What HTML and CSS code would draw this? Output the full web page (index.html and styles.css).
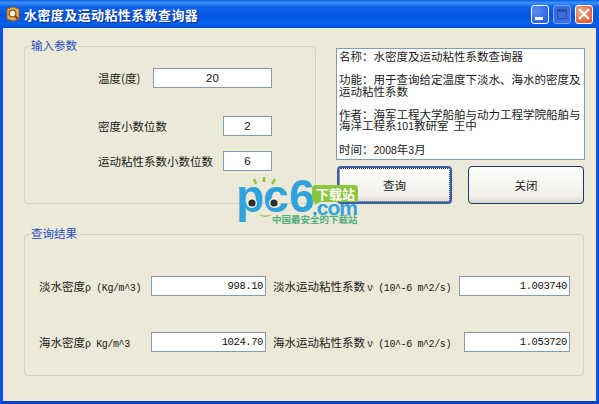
FILE: index.html
```html
<!DOCTYPE html>
<html lang="zh-CN">
<head>
    <meta charset="UTF-8">
    <title>水密度及运动粘性系数查询器</title>
    <link rel="stylesheet" href="styles.css">
</head>
<body>
    <div class="window">
        <div class="titlebar">
            <svg class="app-icon" width="16" height="16" viewBox="0 0 16 16">
                <path d="M2 3 L8 1 L14 3 L14 13 L8 15 L2 13 Z" fill="#e8b04a" stroke="#a8641c"/>
                <circle cx="7.5" cy="7.5" r="3.4" fill="#f6f2e4" stroke="#8a5a20" stroke-width="1.4"/>
                <path d="M10 10 L13 13" stroke="#8a3a10" stroke-width="2"/>
            </svg>
            <span class="title">水密度及运动粘性系数查询器</span>
            <div class="caption-btns">
                <div class="cap-btn cap-min"><span class="min-glyph"></span></div>
                <div class="cap-btn cap-max"><span class="max-glyph"></span></div>
                <div class="cap-btn cap-close">
                    <svg width="14" height="14" viewBox="0 0 14 14"><path d="M2 2 L12 12 M12 2 L2 12" stroke="#fff" stroke-width="2.4"/></svg>
                </div>
            </div>
        </div>

        <div class="client">
            <div class="top-row">
                <fieldset class="group group-input">
                    <legend>输入参数</legend>
                    <div class="group-body input-body">
                        <div class="row row-temp">
                            <span class="label">温度(度)</span>
                            <div class="field field-temp">20</div>
                        </div>
                        <div class="row row-density">
                            <span class="label">密度小数位数</span>
                            <div class="field field-small">2</div>
                        </div>
                        <div class="row row-visc">
                            <span class="label">运动粘性系数小数位数</span>
                            <div class="field field-small">6</div>
                        </div>
                    </div>
                </fieldset>

                <div class="side">
                    <div class="about">
                        名称：水密度及运动粘性系数查询器<br><br>
                        功能：用于查询给定温度下淡水、海水的密度及<br>运动粘性系数<br><br>
                        作者：海军工程大学船舶与动力工程学院船舶与<br>海洋工程系<span class="digits">101</span>教研室&nbsp;&nbsp;王中<br><br>
                        时间：<span class="digits">2008</span>年<span class="digits">3</span>月
                    </div>
                    <div class="btn-group">
                        <button class="btn btn-default">查询</button>
                        <button class="btn">关闭</button>
                    </div>
                </div>
            </div>

            <fieldset class="group group-result">
                <legend>查询结果</legend>
                <div class="group-body result-body">
                    <div class="result-row">
                        <span class="label label-left">淡水密度<span class="latin">ρ (Kg/m^3)</span></span>
                        <div class="field field-num field-density">998.10</div>
                        <span class="label label-right">淡水运动粘性系数<span class="latin latin-visc">ν (10^-6 m^2/s)</span></span>
                        <div class="field field-num field-fresh">1.003740</div>
                    </div>
                    <div class="result-row result-row-2">
                        <span class="label label-left">海水密度<span class="latin">ρ Kg/m^3</span></span>
                        <div class="field field-num field-density">1024.70</div>
                        <span class="label label-right">海水运动粘性系数<span class="latin latin-visc">ν (10^-6 m^2/s)</span></span>
                        <div class="field field-num field-sea">1.053720</div>
                    </div>
                </div>
            </fieldset>

            <!-- watermark sits on top of the form -->
            <svg class="watermark" width="125" height="80" viewBox="0 -14 125 80">
                <path d="M20 8 L18 3 M28 6 L28 1 M36 8 L39 3" stroke="#8cc63f" stroke-width="2.5" fill="none"/>
                <text class="wm-pc" x="0" y="36">pc</text>
                <text class="wm-pc" x="53" y="36">6</text>
                <circle cx="16" cy="27" r="5" fill="#f4f2e6"/>
                <circle cx="16" cy="27" r="3.6" fill="#2c2c2c"/>
                <circle cx="38" cy="27" r="5" fill="#f4f2e6"/>
                <circle cx="38" cy="27" r="3.6" fill="#2c2c2c"/>
                <path d="M22 38 Q29 44 37 38 Q29 41 22 38 Z" fill="#8cc63f"/>
                <path d="M76 13 Q76 9 80 9 L118 9 Q122 9 122 13 L122 23 Q122 26 118 26 L84 26 L78 29 L79 26 Q76 25 76 23 Z" fill="#8cc63f"/>
                <text class="wm-site" x="80" y="23">下载站</text>
                <text class="wm-com" x="76" y="39">.com</text>
                <text class="wm-slogan" x="36" y="47">中国最安全的下载站</text>
            </svg>
        </div>
    </div>
</body>
</html>
```

FILE: styles.css
```css
* {
    box-sizing: border-box;
}

html, body {
    margin: 0;
    padding: 0;
    height: 100%;
    overflow: hidden;
}

body {
    font-family: "Noto Sans CJK SC", "Liberation Sans", sans-serif;
    font-size: 11.5px;
    color: #1a1a1a;
}

.window {
    width: 599px;
    height: 404px;
    display: flex;
    flex-direction: column;
    background: #0a50e0;
    border-left: 3px solid #0c52e6;
    border-right: 3px solid #0c52e6;
    border-bottom: 3px solid #0a3fc0;
}

/* title bar */
.titlebar {
    height: 28px;
    margin: 0 -3px;
    display: flex;
    align-items: center;
    padding: 0 6px 0 5px;
    background: linear-gradient(#0a5ee8 0%, #3c92f8 10%, #0e62ea 24%, #0355e0 55%, #0660ee 85%, #0350d4 100%);
}

.app-icon {
    flex: none;
}

.title {
    margin-left: 3px;
    font-size: 13px;
    font-weight: bold;
    letter-spacing: 0.4px;
    color: #fff;
    text-shadow: 1px 1px 1px #0a2a80;
}

.caption-btns {
    margin-left: auto;
    display: flex;
    gap: 4px;
}

.cap-btn {
    width: 18px;
    height: 19px;
    border: 1px solid #fff;
    border-radius: 3px;
    display: flex;
    align-items: center;
    justify-content: center;
    background: radial-gradient(circle at 30% 30%, #5a8cf5, #2358d8);
}

.cap-min {
    align-items: flex-end;
    justify-content: flex-start;
    padding: 0 0 3px 3px;
}

.min-glyph {
    width: 8px;
    height: 3px;
    background: #fff;
}

.cap-max {
    border-color: #7ea4ee;
    background: #3a6ee0;
}

.max-glyph {
    width: 10px;
    height: 10px;
    border: 1px solid #2850b0;
    border-top-width: 3px;
}

.cap-close {
    background: radial-gradient(circle at 30% 30%, #f4a484, #de4a20);
}

/* client area */
.client {
    position: relative;
    flex: 1;
    background: #ece9d8;
    padding: 11px 11px 0 21px;
}

.top-row {
    display: flex;
    gap: 20px;
}

.group {
    margin: 0;
    padding: 0;
    border: 1px solid #d4d1c0;
    border-radius: 4px;
    min-width: 0;
}

.group legend {
    margin-left: 5px;
    padding: 0 1px 2px;
    font-size: 11.5px;
    line-height: 13px;
    color: #1f4fc0;
}

.group-input {
    flex: none;
    width: 292px;
    height: 165px;
}

.input-body {
    padding: 14px 43px 0 73px;
}

.row {
    display: flex;
    align-items: center;
}

.label {
    white-space: nowrap;
}

.row-density {
    margin-top: 28px;
}

.row-visc {
    margin-top: 15px;
}

.field {
    flex: none;
    height: 20px;
    line-height: 18px;
    background: #fff;
    border: 1px solid #7f9db9;
    text-align: center;
    font-family: "Liberation Sans", sans-serif;
    font-size: 11.5px;
    color: #111;
}

.field-temp {
    width: 119px;
    margin-left: auto;
}

.field-small {
    width: 49px;
    margin-left: auto;
}

.field-num {
    text-align: right;
    padding-right: 2px;
    font-family: "Liberation Mono", monospace;
    font-size: 10.5px;
    letter-spacing: -0.4px;
}

.side {
    flex: 1;
    padding-top: 9px;
}

.about {
    height: 112px;
    padding: 2px 2px;
    background: #fff;
    border: 1px solid #7f9db9;
    line-height: 11.5px;
    white-space: nowrap;
}

.digits {
    font-family: "Liberation Sans", sans-serif;
    font-size: 10.5px;
}

.btn-group {
    display: flex;
    justify-content: space-between;
    margin-top: 6px;
    padding: 0 1px;
}

.btn {
    width: 116px;
    height: 38px;
    padding: 0;
    border: 1px solid #0f3a6c;
    border-radius: 4px;
    background: linear-gradient(#fdfdfb, #f2f1ea 80%, #dcd8cc);
    font-family: inherit;
    font-size: 11.5px;
    color: #1a1a1a;
}

.btn-default {
    width: 115px;
    border: 2px solid #3a5fa8;
    outline: 1px dotted #1a2f70;
    outline-offset: -3px;
}

.group-result {
    margin-top: 23px;
    width: 560px;
    height: 149px;
}

.result-body {
    padding: 34px 13px 0 14px;
}

.result-row {
    display: flex;
    align-items: center;
}

.result-row-2 {
    margin-top: 36px;
}

.label-left {
    width: 112px;
    flex: none;
}

.label-right {
    margin-left: 7px;
}

.latin {
    font-family: "Liberation Mono", monospace;
    font-size: 10px;
    letter-spacing: -0.4px;
}

.latin-visc {
    margin-left: 2px;
}

.field-density {
    width: 115px;
}

.field-fresh {
    width: 111px;
    margin-left: auto;
}

.field-sea {
    width: 106px;
    margin-left: auto;
}

/* pc6 watermark */
.watermark {
    position: absolute;
    left: 233px;
    top: 134px;
}

.wm-pc {
    font-family: "Liberation Sans", sans-serif;
    font-size: 46px;
    font-weight: bold;
    fill: #2fa3dc;
    letter-spacing: -1px;
}

.wm-site {
    font-family: "Noto Sans CJK SC", sans-serif;
    font-size: 13px;
    font-weight: bold;
    fill: #fff;
}

.wm-com {
    font-family: "Liberation Sans", sans-serif;
    font-size: 21px;
    font-weight: bold;
    fill: #2fa3dc;
    letter-spacing: -1px;
}

.wm-slogan {
    font-family: "Noto Sans CJK SC", sans-serif;
    font-size: 9.5px;
    font-weight: bold;
    fill: #4fae7a;
}
```
